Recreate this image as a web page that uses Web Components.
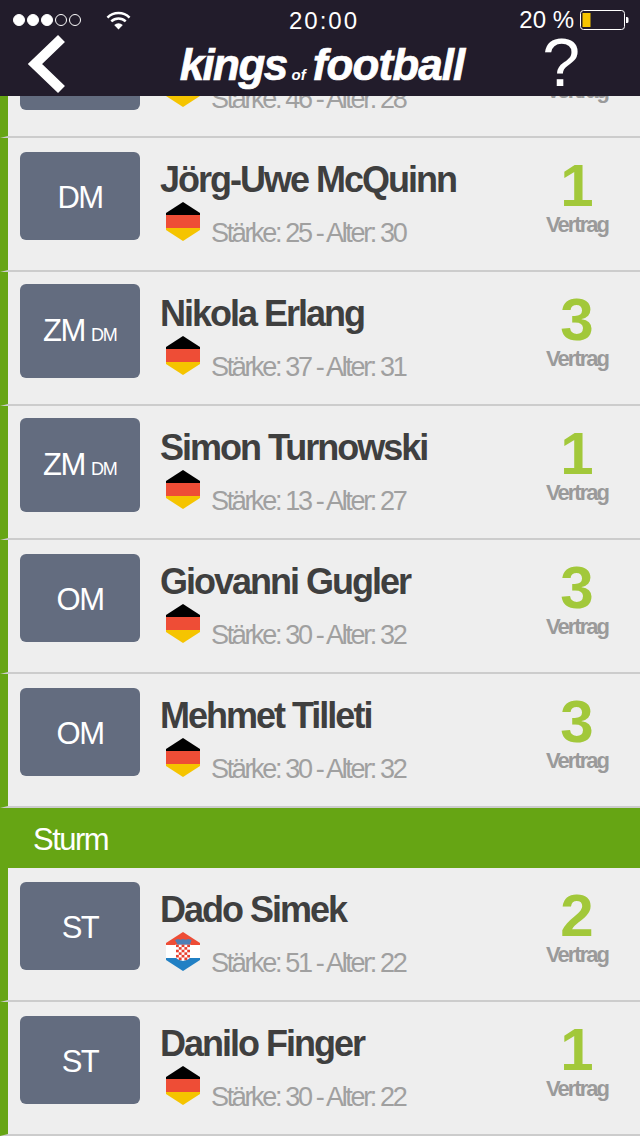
<!DOCTYPE html>
<html>
<head>
<meta charset="utf-8">
<title>kings of football</title>
<style>
    html, body { margin: 0; padding: 0; background: #eeeeee; }
    body { width: 640px; height: 1136px; overflow: hidden; font-family: "Liberation Sans", Arial, sans-serif; }
</style>
</head>
<body>
<squad-screen>
    <app-header slot="header"></app-header>
    <player-row position="" stats="Stärke: 46 - Alter: 28" flag="de" tall></player-row>
    <player-row position="DM" name="Jörg-Uwe McQuinn" stats="Stärke: 25 - Alter: 30" flag="de" years="1"></player-row>
    <player-row position="ZM" second="DM" name="Nikola Erlang" stats="Stärke: 37 - Alter: 31" flag="de" years="3" tall></player-row>
    <player-row position="ZM" second="DM" name="Simon Turnowski" stats="Stärke: 13 - Alter: 27" flag="de" years="1" tall></player-row>
    <player-row position="OM" name="Giovanni Gugler" stats="Stärke: 30 - Alter: 32" flag="de" years="3"></player-row>
    <player-row position="OM" name="Mehmet Tilleti" stats="Stärke: 30 - Alter: 32" flag="de" years="3"></player-row>
    <section-title>Sturm</section-title>
    <player-row position="ST" name="Dado Simek" stats="Stärke: 51 - Alter: 22" flag="hr" years="2"></player-row>
    <player-row position="ST" name="Danilo Finger" stats="Stärke: 30 - Alter: 22" flag="de" years="1"></player-row>
</squad-screen>

<script>
class SquadScreen extends HTMLElement {
    constructor() {
        super();
        this.attachShadow({ mode: 'open' });
        this.shadowRoot.innerHTML = `
            <style>
                :host { display: block; position: relative; width: 640px; height: 1136px; overflow: hidden; background: #eeeeee; }
                .list { display: flex; flex-direction: column; padding-top: 4px; }
                .head { position: absolute; top: 0; left: 0; right: 0; z-index: 2; }
            </style>
            <div class="list"><slot></slot></div>
            <div class="head"><slot name="header"></slot></div>
        `;
    }
}

class AppHeader extends HTMLElement {
    constructor() {
        super();
        this.attachShadow({ mode: 'open' });
        this.shadowRoot.innerHTML = `
            <style>
                :host { display: block; height: 96px; background: #221c2b; color: #fff; font-family: "Liberation Sans", Arial, sans-serif; }
                .status { display: grid; grid-template-columns: 1fr auto 1fr; align-items: center; height: 40px; padding: 0 11px 0 13px; }
                .left { display: flex; align-items: center; gap: 25px; }
                .dots { display: flex; gap: 2px; }
                .dots i { box-sizing: border-box; width: 12px; height: 12px; border-radius: 50%; border: 1px solid #fff; }
                .dots i.on { background: #fff; }
                .time { font-size: 24px; letter-spacing: 2px; padding: 1px 0 0 6px; }
                .right { display: flex; align-items: center; justify-content: flex-end; gap: 6px; font-size: 24px; }
                .nav { display: grid; grid-template-columns: 1fr auto 1fr; align-items: center; height: 56px; }
                .back { display: block; margin: -6px 0 0 26px; }
                .logo { font-weight: bold; font-style: italic; font-size: 44px; letter-spacing: -1.600px; white-space: nowrap; margin: -6px 0 0 4px; -webkit-text-stroke: 0.7px #fff; }
                .logo small { font-size: 15px; letter-spacing: 0; margin: 0 7px 0 5px; -webkit-text-stroke: 0; }
                .logo span { letter-spacing: -0.900px; }
                .help { justify-self: end; margin: -12px 60px 0 0; font-size: 68px; line-height: 56px; }
            </style>
            <div class="status">
                <div class="left">
                    <div class="dots"><i class="on"></i><i class="on"></i><i class="on"></i><i></i><i></i></div>
                    <svg width="25" height="20" viewBox="0 0 26 20">
                        <path d="M1.500 7.500a16.500 16.500 0 0 1 23 0M5.500 11.500a11 11 0 0 1 15 0" fill="none" stroke="#fff" stroke-width="2.600"/>
                        <path d="M13 20l-4.500-4.800a7 7 0 0 1 9 0z" fill="#fff"/>
                    </svg>
                </div>
                <div class="time">20:00</div>
                <div class="right">
                    <span>20 %</span>
                    <svg width="49" height="20" viewBox="0 0 49 20">
                        <rect x="0.500" y="0.500" width="44" height="19" rx="3" fill="none" stroke="#fff" stroke-width="1"/>
                        <rect x="2.500" y="3" width="8" height="14" fill="#f5c400"/>
                        <path d="M46 7h1a1.500 1.500 0 0 1 1.500 1.500v3a1.500 1.500 0 0 1-1.500 1.500h-1z" fill="#fff"/>
                    </svg>
                </div>
            </div>
            <div class="nav">
                <svg class="back" width="40" height="62" viewBox="0 0 40 62">
                    <path d="M35.500 4.500L9 30l26.500 25.500" fill="none" stroke="#fff" stroke-width="10"/>
                </svg>
                <div class="logo">kings<small>of</small><span>football</span></div>
                <div class="help">?</div>
            </div>
        `;
    }
}

class SectionTitle extends HTMLElement {
    constructor() {
        super();
        this.attachShadow({ mode: 'open' });
        this.shadowRoot.innerHTML = `
            <style>
                :host { display: flex; align-items: center; box-sizing: border-box; height: 60px; padding: 4px 0 0 33px; background: #66a514; color: #fff; font-size: 31px; letter-spacing: -1.500px; }
            </style>
            <slot></slot>
        `;
    }
}

class HexFlag extends HTMLElement {
    constructor() {
        super();
        this.attachShadow({ mode: 'open' });
        const country = this.getAttribute('country') || 'de';
        this.shadowRoot.innerHTML = `
            <style>
                :host { display: block; width: 34px; height: 39px; }
                svg { display: block; }
            </style>
            <svg width="34" height="39" viewBox="0 0 34 39">
                <clipPath id="hex"><polygon points="17,0 34,11 34,28 17,39 0,28 0,11"/></clipPath>
                <g clip-path="url(#hex)">${country === 'hr' ? this.croatia() : this.germany()}</g>
            </svg>
        `;
    }

    germany() {
        return `
            <rect width="34" height="13" fill="#000"/>
            <rect y="13" width="34" height="13" fill="#ee4d36"/>
            <rect y="26" width="34" height="13" fill="#f5c400"/>
        `;
    }

    croatia() {
        let checks = '';
        for (let r = 0; r < 6; r++) {
            for (let c = 0; c < 5; c++) {
                if ((r + c) % 2 === 0) checks += `<rect x="${10 + c * 2.800}" y="${12.500 + r * 2.600}" width="2.800" height="2.600" fill="#e8402f"/>`;
            }
        }
        return `
            <rect width="34" height="13" fill="#ee4d36"/>
            <rect y="13" width="34" height="13" fill="#fff"/>
            <rect y="26" width="34" height="13" fill="#2180c4"/>
            <path d="M9.500 12.500h15v12c0 2-3.500 3.500-7.500 4.500-4-1-7.500-2.500-7.500-4.500z" fill="#fff"/>
            ${checks}
            <path d="M9 8l3-1 2.500.8 2.500-.8 2.500.8 3-.8 3 1-1.500 4.500h-12.500z" fill="#4f7fb5"/>
        `;
    }
}

class PlayerRow extends HTMLElement {
    constructor() {
        super();
        this.attachShadow({ mode: 'open' });
        const attr = name => this.getAttribute(name) || '';
        const second = attr('second') ? `<small>${attr('second')}</small>` : '';
        this.shadowRoot.innerHTML = `
            <style>
                :host { display: grid; grid-template-columns: 120px 1fr 120px; box-sizing: border-box; height: 134px; padding: 0 3px 0 12px; background: #eeeeee; border-left: 8px solid #66a514; border-bottom: 2px solid #cccccc; font-family: "Liberation Sans", Arial, sans-serif; }
                .pos { box-sizing: border-box; height: 88px; padding-top: 28px; margin-top: 14px; background: #636c7f; border-radius: 6px; color: #fff; font-size: 31px; line-height: 36px; letter-spacing: -1.500px; text-align: center; white-space: nowrap; }
                :host([tall]) .pos { height: 94px; padding-top: 29px; margin-top: 12px; }
                .pos small { font-size: 18px; letter-spacing: -1px; margin-left: 6px; }
                .info { padding-left: 20px; min-width: 0; }
                .name { height: 58px; padding-top: 21px; box-sizing: border-box; font-size: 36px; line-height: 42px; font-weight: bold; letter-spacing: -2px; color: #3f3f3f; white-space: nowrap; }
                .meta { display: flex; margin-left: 6px; margin-top: 6px; }
                .stats { margin: 15px 0 0 11px; font-size: 27px; line-height: 32px; letter-spacing: -2.350px; color: #a0a0a0; white-space: nowrap; }
                .deal { display: flex; flex-direction: column; align-items: center; }
                .years { height: 68px; box-sizing: border-box; padding-top: 13px; font-size: 60px; line-height: 69px; font-weight: bold; color: #a2c83a; }
                .label { font-size: 22px; line-height: 26px; margin-top: 6px; font-weight: bold; letter-spacing: -2px; color: #9a9a9a; }
            </style>
            <div class="pos"><span>${attr('position')}</span>${second}</div>
            <div class="info">
                <div class="name">${attr('name')}</div>
                <div class="meta">
                    <hex-flag country="${attr('flag')}"></hex-flag>
                    <div class="stats">${attr('stats')}</div>
                </div>
            </div>
            <div class="deal">
                <div class="years">${attr('years')}</div>
                <div class="label">Vertrag</div>
            </div>
        `;
    }
}

customElements.define('hex-flag', HexFlag);
customElements.define('player-row', PlayerRow);
customElements.define('section-title', SectionTitle);
customElements.define('app-header', AppHeader);
customElements.define('squad-screen', SquadScreen);
</script>
</body>
</html>
